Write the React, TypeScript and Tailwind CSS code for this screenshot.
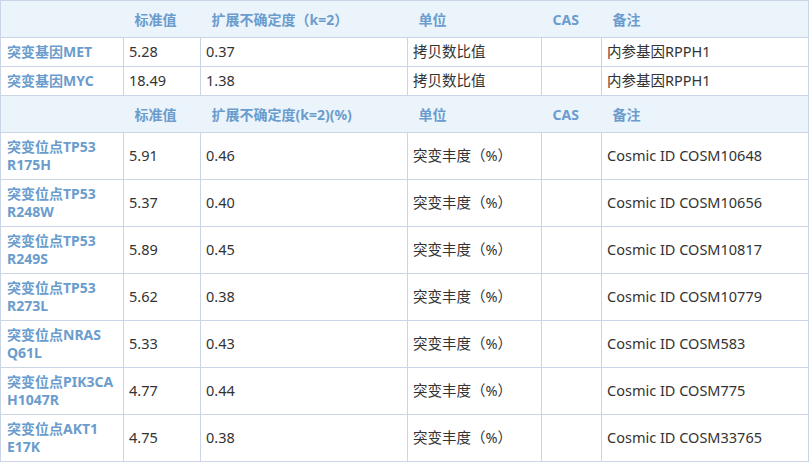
const F = { fontFamily: '"Noto Sans","Noto Sans CJK SC",sans-serif' };
const rows1 = [["突变基因MET","5.28","0.37","拷贝数比值","","内参基因RPPH1"],["突变基因MYC","18.49","1.38","拷贝数比值","","内参基因RPPH1"]];
const rows2 = [["突变位点TP53","R175H","5.91","0.46","COSM10648"],["突变位点TP53","R248W","5.37","0.40","COSM10656"],["突变位点TP53","R249S","5.89","0.45","COSM10817"],["突变位点TP53","R273L","5.62","0.38","COSM10779"],["突变位点NRAS","Q61L","5.33","0.43","COSM583"],["突变位点PIK3CA","H1047R","4.77","0.44","COSM775"],["突变位点AKT1","E17K","4.75","0.38","COSM33765"]];
const td = "border border-[#c9d5e6] px-[5px] text-[14.5px] text-[#333]";
const name = "border border-[#c9d5e6] px-[6px] text-[14px] font-bold text-[#6a9ccd] leading-[18px]";
function Head({ k }: { k: string }) {
  const h = "px-[11px] text-left font-bold text-[14px] text-[#6a9ccd]";
  return (
    <tr className="bg-[#ebf3fb] border border-[#c9d5e6] h-[37px]">
      <th className={h}></th><th className={h}>标准值</th><th className={h}>{k}</th><th className={h}>单位</th><th className={h}>CAS</th><th className={h}>备注</th>
    </tr>
  );
}
export default function App() {
  return (
    <div className="w-[810px] h-[464px] bg-white overflow-hidden" style={F}>
      <table className="table-fixed border-collapse w-[809px]">
        <colgroup><col className="w-[123px]" /><col className="w-[77px]" /><col className="w-[207px]" /><col className="w-[134px]" /><col className="w-[60px]" /><col /></colgroup>
        <tbody>
          <Head k="扩展不确定度（k=2）" />
          {rows1.map((r, i) => (
            <tr key={i} className="h-[29px]">
              <td className={name}>{r[0]}</td>
              {r.slice(1).map((c, j) => <td key={j} className={td}>{c}</td>)}
            </tr>
          ))}
          <Head k="扩展不确定度(k=2)(%)" />
          {rows2.map((r, i) => (
            <tr key={i} className="h-[47px]">
              <td className={name}>{r[0]}<br />{r[1]}</td>
              <td className={td}>{r[2]}</td><td className={td}>{r[3]}</td><td className={td}>突变丰度（%）</td><td className={td}></td><td className={td}>Cosmic ID {r[4]}</td>
            </tr>
          ))}
        </tbody>
      </table>
    </div>
  );
}
